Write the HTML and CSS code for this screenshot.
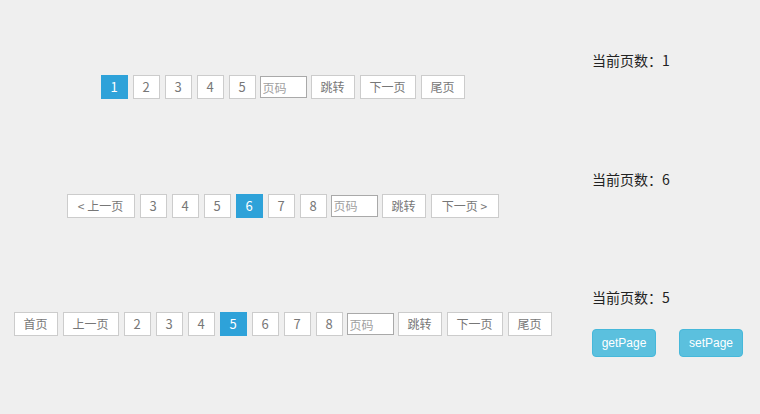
FILE: index.html
```html
<!DOCTYPE html>
<html lang="zh-CN">
<head>
    <meta charset="UTF-8">
    <meta name="viewport" content="width=device-width, initial-scale=1.0">
    <title>分页插件</title>
    <link rel="stylesheet" href="styles.css">
</head>
<body>
    <div class="demo">
        <div class="pager-wrap">
            <div class="pager">
                <a class="page num active">1</a>
                <a class="page num">2</a>
                <a class="page num">3</a>
                <a class="page num">4</a>
                <a class="page num">5</a>
                <input class="jump-input" type="text" placeholder="页码">
                <a class="page two">跳转</a>
                <a class="page three">下一页</a>
                <a class="page two">尾页</a>
            </div>
        </div>
        <div class="info">
            <p class="current">当前页数：1</p>
        </div>
    </div>

    <div class="demo">
        <div class="pager-wrap">
            <div class="pager">
                <a class="page arrow">&lt; 上一页</a>
                <a class="page num">3</a>
                <a class="page num">4</a>
                <a class="page num">5</a>
                <a class="page num active">6</a>
                <a class="page num">7</a>
                <a class="page num">8</a>
                <input class="jump-input" type="text" placeholder="页码">
                <a class="page two">跳转</a>
                <a class="page arrow">下一页 &gt;</a>
            </div>
        </div>
        <div class="info">
            <p class="current">当前页数：6</p>
        </div>
    </div>

    <div class="demo">
        <div class="pager-wrap">
            <div class="pager">
                <a class="page two">首页</a>
                <a class="page three">上一页</a>
                <a class="page num">2</a>
                <a class="page num">3</a>
                <a class="page num">4</a>
                <a class="page num active">5</a>
                <a class="page num">6</a>
                <a class="page num">7</a>
                <a class="page num">8</a>
                <input class="jump-input" type="text" placeholder="页码">
                <a class="page two">跳转</a>
                <a class="page three">下一页</a>
                <a class="page two">尾页</a>
            </div>
        </div>
        <div class="info">
            <p class="current">当前页数：5</p>
            <div class="actions">
                <button class="btn-info">getPage</button>
                <button class="btn-info">setPage</button>
            </div>
        </div>
    </div>
</body>
</html>
```

FILE: styles.css
```css
body {
    margin: 0;
    padding-top: 50px;
    background-color: #efefef;
    font-family: "Noto Sans CJK SC", "Microsoft YaHei", sans-serif;
}
.demo {
    display: flex;
    align-items: flex-start;
    height: 118.5px;
}
.pager-wrap {
    width: 565px;
    padding-top: 25px;
}
.pager {
    display: flex;
    justify-content: center;
    align-items: center;
    gap: 5px;
}
.page {
    box-sizing: border-box;
    height: 24px;
    line-height: 22px;
    border: 1px solid #cccccc;
    background: #ffffff;
    color: #777777;
    font-size: 12px;
    text-align: center;
    cursor: pointer;
}
.page.num {
    width: 27px;
    font-size: 13px;
}
.page.two {
    width: 44px;
}
.page.three {
    width: 56px;
}
.page.arrow {
    width: 68px;
}
.page.active {
    background: #2ea2d9;
    border-color: #2ea2d9;
    color: #ffffff;
}
.jump-input {
    box-sizing: border-box;
    width: 47px;
    height: 22px;
    margin: 0 -1px;
    padding: 0 2px;
    border: 1px solid #a9a9a9;
    background: #ffffff;
    font-family: inherit;
    font-size: 12px;
    color: #777777;
}
.jump-input::placeholder {
    color: #a0a0a0;
}
.info {
    margin-left: 27px;
}
.current {
    margin: 0;
    font-size: 14px;
    line-height: 20px;
    color: #222222;
}
.actions {
    display: flex;
    gap: 23px;
    margin-top: 22px;
}
.btn-info {
    box-sizing: border-box;
    width: 64px;
    height: 28px;
    padding: 0;
    border: 1px solid #46b8da;
    border-radius: 4px;
    background-color: #5bc0de;
    color: #ffffff;
    font-family: "Liberation Sans", Arial, sans-serif;
    font-size: 12px;
    cursor: pointer;
}
```
